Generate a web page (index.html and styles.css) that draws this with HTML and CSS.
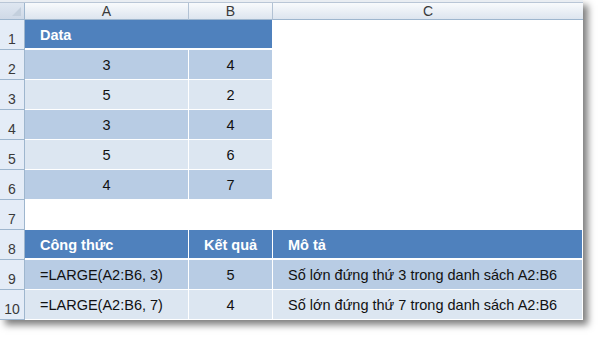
FILE: index.html
```html
<!DOCTYPE html>
<html>
<head>
<meta charset="utf-8">
<link rel="stylesheet" href="styles.css">
</head>
<body>
<div class="sheet">
  <div class="topstrip"></div>
  <div class="grid">
    <div class="corner"><span class="tri"></span></div>
    <div class="colhead">A</div>
    <div class="colhead">B</div>
    <div class="colhead last">C</div>

    <div class="rowhead">1</div>
    <div class="cell hdr span2">Data</div>
    <div class="cell empty"></div>

    <div class="rowhead">2</div>
    <div class="cell dark center">3</div>
    <div class="cell dark center">4</div>
    <div class="cell empty"></div>

    <div class="rowhead">3</div>
    <div class="cell light center">5</div>
    <div class="cell light center">2</div>
    <div class="cell empty"></div>

    <div class="rowhead">4</div>
    <div class="cell dark center">3</div>
    <div class="cell dark center">4</div>
    <div class="cell empty"></div>

    <div class="rowhead">5</div>
    <div class="cell light center">5</div>
    <div class="cell light center">6</div>
    <div class="cell empty"></div>

    <div class="rowhead">6</div>
    <div class="cell dark center">4</div>
    <div class="cell dark center">7</div>
    <div class="cell empty"></div>

    <div class="rowhead">7</div>
    <div class="cell empty"></div>
    <div class="cell empty"></div>
    <div class="cell empty"></div>

    <div class="rowhead">8</div>
    <div class="cell hdr">Công thức</div>
    <div class="cell hdr center">Kết quả</div>
    <div class="cell hdr">Mô tả</div>

    <div class="rowhead">9</div>
    <div class="cell dark">=LARGE(A2:B6, 3)</div>
    <div class="cell dark center">5</div>
    <div class="cell dark">Số lớn đứng thứ 3 trong danh sách A2:B6</div>

    <div class="rowhead">10</div>
    <div class="cell light">=LARGE(A2:B6, 7)</div>
    <div class="cell light center">4</div>
    <div class="cell light">Số lớn đứng thứ 7 trong danh sách A2:B6</div>
  </div>
</div>
</body>
</html>
```
FILE: styles.css
```css
html, body {
  margin: 0;
  padding: 0;
  background: #ffffff;
}
body {
  font-family: "Liberation Sans", Arial, sans-serif;
  width: 599px;
  height: 337px;
  overflow: hidden;
}
.sheet {
  width: 583px;
  background: #ffffff;
  box-shadow: 5px 5px 7px rgba(0, 0, 0, 0.5);
}
.topstrip {
  height: 3px;
  background: #e9edf2;
  border-bottom: 1px solid #b9c6d6;
  box-sizing: border-box;
}
.grid {
  display: grid;
  grid-template-columns: 25px 164px 84px 310px;
  grid-template-rows: 17px repeat(10, 30px);
}
.corner {
  background: linear-gradient(#dfe7f1, #cfd9e7);
  border-right: 1px solid #9eb6ce;
  border-bottom: 1px solid #9eb6ce;
  box-sizing: border-box;
  position: relative;
}
.tri {
  position: absolute;
  right: 3px;
  bottom: 3px;
  width: 0;
  height: 0;
  border-left: 9px solid transparent;
  border-bottom: 9px solid #c3cfdd;
}
.colhead {
  background: linear-gradient(#f8fafc, #dde5ef);
  border-right: 1px solid #b2c2d4;
  border-bottom: 1px solid #9eb6ce;
  box-sizing: border-box;
  color: #3a3a3a;
  font-size: 14px;
  display: flex;
  align-items: center;
  justify-content: center;
}
.colhead.last {
  border-right: none;
}
.rowhead {
  background: #e4ecf7;
  border-right: 1px solid #9eb6ce;
  border-bottom: 1px solid #9eb6ce;
  box-sizing: border-box;
  color: #3a3a3a;
  font-size: 14px;
  display: flex;
  align-items: flex-end;
  justify-content: center;
  padding-bottom: 2px;
}
.cell {
  box-sizing: border-box;
  font-size: 14.5px;
  color: #111;
  display: flex;
  align-items: center;
  padding-left: 15px;
  border-right: 1px solid #ffffff;
  border-bottom: 1px solid #ffffff;
  white-space: nowrap;
}
.cell.center {
  justify-content: center;
  padding-left: 0;
}
.cell.empty {
  background: #ffffff;
}
.cell.hdr {
  background: #4f81bd;
  color: #ffffff;
  font-weight: bold;
  border-bottom-width: 2px;
  padding-top: 1px;
}
.cell.span2 {
  grid-column: span 2;
}
.cell.dark {
  background: #b8cce4;
}
.cell.light {
  background: #dce6f1;
}
```
